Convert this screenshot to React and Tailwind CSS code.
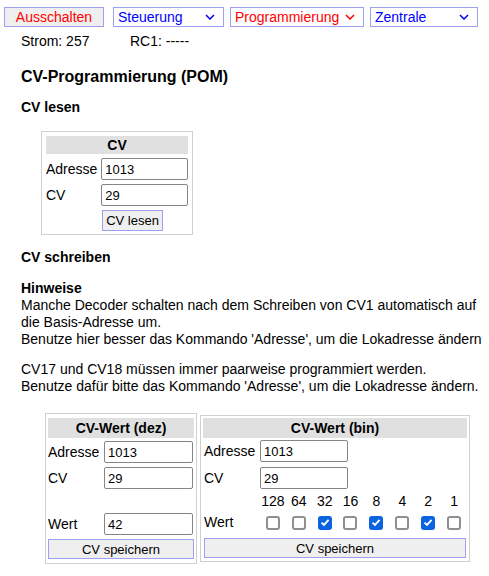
import React from "react";

const Chevron = ({ color }) => (
  <svg width="10" height="6" viewBox="0 0 10 6" className="shrink-0">
    <path d="M1 1 L5 5 L9 1" fill="none" stroke={color} strokeWidth="1.5" />
  </svg>
);

const FakeSelect = ({ label, color, w }) => (
  <div
    className={`h-[20px] border border-[#a0a0f0] bg-white flex items-center justify-between pl-[4px] pr-[8px] ${w}`}
    style={{ color }}
  >
    <span className="leading-none">{label}</span>
    <Chevron color={color} />
  </div>
);

const TextInput = ({ value, w = "w-[88px]" }) => (
  <div
    className={`h-[22px] ${w} border border-[#858585] rounded-[2px] bg-white flex items-center pl-[3px] text-[13px] leading-none`}
  >
    {value}
  </div>
);

const Check = ({ on }) =>
  on ? (
    <div className="w-[14px] h-[14px] rounded-[3px] bg-[#0b63e0] flex items-center justify-center">
      <svg width="10" height="9" viewBox="0 0 10 9">
        <path d="M1.5 4.6 L4 7 L8.6 1.8" fill="none" stroke="white" strokeWidth="1.9" />
      </svg>
    </div>
  ) : (
    <div className="w-[14px] h-[14px] rounded-[3px] border-2 border-[#8f8f8f] bg-white" />
  );

export default function App() {
  const bits = [128, 64, 32, 16, 8, 4, 2, 1];
  const checked = [false, false, true, false, true, false, true, false];
  return (
    <div className="w-[489px] h-[576px] bg-white text-black font-['Liberation_Sans',Arial,sans-serif] text-[14px] leading-[17px] overflow-hidden">
      {/* top bar */}
      <div className="flex items-center pt-[7px] pl-[4px]">
        <div className="w-[100px] h-[20px] border border-[#a0a0f0] bg-[#efefef] text-[#ff0000] flex items-center justify-center leading-none">
          Ausschalten
        </div>
        <div className="ml-[9px]">
          <FakeSelect label="Steuerung" color="#0000ff" w="w-[111px]" />
        </div>
        <div className="ml-[6px]">
          <FakeSelect label="Programmierung" color="#ff0000" w="w-[134px]" />
        </div>
        <div className="ml-[6px]">
          <FakeSelect label="Zentrale" color="#0000ff" w="w-[108px]" />
        </div>
      </div>
      <div className="flex pl-[21px] mt-[6px]">
        <span className="w-[109px]">Strom: 257</span>
        <span>RC1: -----</span>
      </div>

      <div className="pl-[21px]">
        <div className="mt-[17px] font-bold text-[16px] leading-[20px]">CV-Programmierung (POM)</div>
        <div className="mt-[12px] font-bold leading-[17px]">CV lesen</div>
      </div>

      {/* CV lesen box */}
      <div className="ml-[41px] mt-[15px] w-[152px] border border-[#d0d0d0] p-[4px] pt-[4px] pb-[3px]">
        <div className="h-[18px] bg-[#e0e0e0] font-bold flex items-center justify-center">CV</div>
        <div className="flex items-center mt-[4px]">
          <span className="w-[56px] pl-[0px]">Adresse</span>
          <TextInput value="1013" />
        </div>
        <div className="flex items-center mt-[4px]">
          <span className="w-[56px]">CV</span>
          <TextInput value="29" />
        </div>
        <div className="flex mt-[4px] pl-[56px]">
          <div className="w-[61px] h-[21px] border border-[#a0a0f0] bg-[#efefef] flex items-center justify-center text-[13px] leading-none">
            CV lesen
          </div>
        </div>
      </div>

      <div className="pl-[21px]">
        <div className="mt-[14px] font-bold">CV schreiben</div>
        <div className="mt-[14px] font-bold">Hinweise</div>
        <div>Manche Decoder schalten nach dem Schreiben von CV1 automatisch auf</div>
        <div>die Basis-Adresse um.</div>
        <div>Benutze hier besser das Kommando 'Adresse', um die Lokadresse ändern</div>
        <div className="mt-[13px]">CV17 und CV18 müssen immer paarweise programmiert werden.</div>
        <div>Benutze dafür bitte das Kommando 'Adresse', um die Lokadresse ändern.</div>
      </div>

      {/* bottom boxes */}
      <div className="flex items-center ml-[45px] mt-[18px] gap-[3px]">
        <div className="w-[152px] border border-[#d0d0d0] px-[2px] pt-[4px] pb-[4px]">
          <div className="h-[20px] bg-[#e0e0e0] font-bold flex items-center justify-center">CV-Wert (dez)</div>
          <div className="flex items-center mt-[3px]">
            <span className="w-[56px]">Adresse</span>
            <TextInput value="1013" w="w-[89px]" />
          </div>
          <div className="flex items-center mt-[4px]">
            <span className="w-[56px]">CV</span>
            <TextInput value="29" w="w-[89px]" />
          </div>
          <div className="h-[24px]" />
          <div className="flex items-center">
            <span className="w-[56px]">Wert</span>
            <TextInput value="42" w="w-[89px]" />
          </div>
          <div className="mt-[4px] h-[20px] border border-[#a0a0f0] bg-[#efefef] flex items-center justify-center text-[13px] leading-none">
            CV speichern
          </div>
        </div>

        <div className="w-[270px] border border-[#d0d0d0] px-[2px] pt-[2px] pb-[3px]">
          <div className="h-[20px] bg-[#e0e0e0] font-bold flex items-center justify-center">CV-Wert (bin)</div>
          <div className="flex items-center mt-[2px]">
            <span className="w-[57px] pl-[1px]">Adresse</span>
            <TextInput value="1013" />
          </div>
          <div className="flex items-center mt-[5px]">
            <span className="w-[57px] pl-[1px]">CV</span>
            <TextInput value="29" />
          </div>
          <div className="flex mt-[4px] pl-[57px]">
            {bits.map((b) => (
              <span key={b} className="w-[26px] text-center">{b}</span>
            ))}
          </div>
          <div className="flex items-center mt-[4px]">
            <span className="w-[57px] pl-[1px]">Wert</span>
            {checked.map((c, i) => (
              <div key={i} className="w-[26px] flex justify-center">
                <Check on={c} />
              </div>
            ))}
          </div>
          <div className="mt-[7px] mx-[1px] h-[20px] border border-[#a0a0f0] bg-[#efefef] flex items-center justify-center text-[13px] leading-none">
            CV speichern
          </div>
        </div>
      </div>
    </div>
  );
}
